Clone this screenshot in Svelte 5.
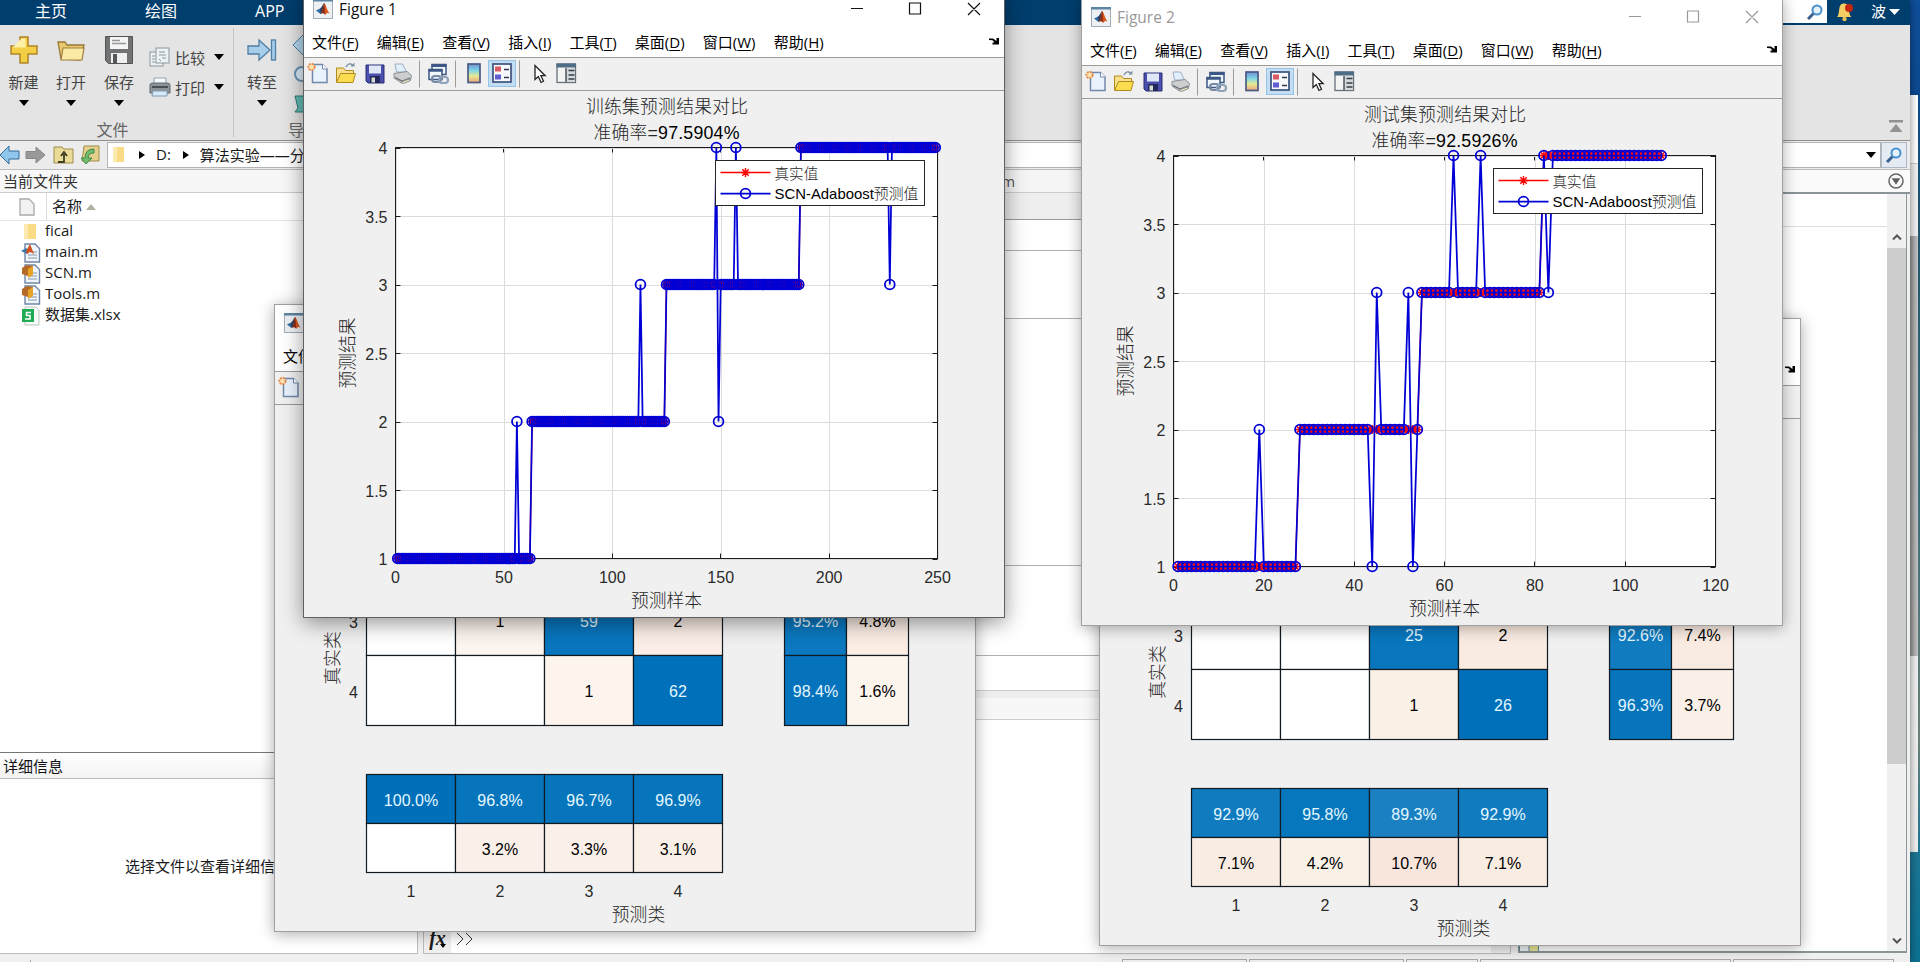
<script lang="ts">
  interface Cell {
    x: number;
    y: number;
    w: number;
    h: number;
    text?: string;
    fill: string;
    light?: boolean;
  }

  const MENUS = [
    ["文件", "F"], ["编辑", "E"], ["查看", "V"], ["插入", "I"],
    ["工具", "T"], ["桌面", "D"], ["窗口", "W"], ["帮助", "H"],
  ];

  const FILES = [
    { name: "fical", kind: "folder" },
    { name: "main.m", kind: "script" },
    { name: "SCN.m", kind: "func" },
    { name: "Tools.m", kind: "func" },
    { name: "数据集.xlsx", kind: "sheet" },
  ];

  // Axes box, in window coordinates
  const L = 92.5, R = 634.5, T = 157.5, B = 568.5;

  // One class per block, with the misclassified samples overridden
  function buildSeries(ends: number[], errors: Record<number, number>) {
    const truth: number[] = [];
    const pred: number[] = [];
    for (let i = 1; i <= ends[ends.length - 1]; i++) {
      const cls = ends.findIndex(e => i <= e) + 1;
      truth.push(cls);
      pred.push(errors[i] ?? cls);
    }
    return { truth, pred };
  }

  const PLOTS = [
    {
      title: "训练集预测结果对比",
      accuracy: "97.5904%",
      max: 250,
      step: 50,
      ...buildSeries([62, 124, 186, 249], { 56: 2, 113: 3, 148: 4, 149: 2, 157: 4, 228: 3 }),
    },
    {
      title: "测试集预测结果对比",
      accuracy: "92.5926%",
      max: 120,
      step: 20,
      ...buildSeries([27, 54, 81, 108], { 19: 2, 44: 1, 45: 3, 52: 3, 53: 1, 62: 4, 68: 4, 83: 3 }),
    },
  ];

  const Y_TICKS = [1, 1.5, 2, 2.5, 3, 3.5, 4];

  const px = (i: number, max: number) => L + (i * (R - L)) / max;
  const py = (v: number) => B - ((v - 1) * (B - T)) / 3;
  const toPoints = (vals: number[], max: number) =>
    vals.map((v, i) => `${px(i + 1, max).toFixed(2)},${py(v).toFixed(2)}`).join(" ");
  const ticks = (max: number, step: number) =>
    Array.from({ length: max / step + 1 }, (_, i) => i * step);

  // rows: [text, fill] pairs; blue cells get light text
  function grid(rows: string[][][], xs: number[], ys: number[]): Cell[] {
    return rows.flatMap((row, r) =>
      row.map(([text, fill], c) => ({
        x: xs[c], y: ys[r], w: xs[c + 1] - xs[c], h: ys[r + 1] - ys[r],
        text, fill, light: fill.startsWith("#0") || fill.startsWith("#1"),
      }))
    );
  }

  const COLS = [92.5, 181.5, 270.5, 359.5, 448.5];
  const SIDE = [510.5, 572.5, 634.5];
  const ROWS = [281.5, 351.5, 421.5];
  const FOOT = [470.5, 519.5, 568.5];

  const MATRICES = [
    [
      ...grid([
        [["", "#fff"], ["1", "#fcf4ee"], ["59", "#0875bd"], ["2", "#fbeee6"]],
        [["", "#fff"], ["", "#fff"], ["1", "#fcf4ed"], ["62", "#0070ba"]],
      ], COLS, ROWS),
      ...grid([
        [["95.2%", "#0b78bf"], ["4.8%", "#fbede4"]],
        [["98.4%", "#0473bc"], ["1.6%", "#fcf5ee"]],
      ], SIDE, ROWS),
      ...grid([
        [["100.0%", "#006fb9"], ["96.8%", "#0675bb"], ["96.7%", "#0675bb"], ["96.9%", "#0675bb"]],
        [["", "#fff"], ["3.2%", "#fbf0e9"], ["3.3%", "#fbf0e9"], ["3.1%", "#fbf0e8"]],
      ], COLS, FOOT),
    ],
    [
      ...grid([
        [["", "#fff"], ["", "#fff"], ["25", "#0876bd"], ["2", "#f9ebe1"]],
        [["", "#fff"], ["", "#fff"], ["1", "#f9f0e6"], ["26", "#0070ba"]],
      ], COLS, ROWS),
      ...grid([
        [["92.6%", "#107bbf"], ["7.4%", "#f9ebe2"]],
        [["96.3%", "#0675bb"], ["3.7%", "#faf0e7"]],
      ], SIDE, ROWS),
      ...grid([
        [["92.9%", "#107bbf"], ["95.8%", "#0777bd"], ["89.3%", "#1a80c1"], ["92.9%", "#107bbf"]],
        [["7.1%", "#f9ece3"], ["4.2%", "#f9f0e6"], ["10.7%", "#f8e6dc"], ["7.1%", "#f9ece3"]],
      ], COLS, FOOT),
    ],
  ];
</script>

{#snippet matlabIcon()}
  <svg width="20" height="20" viewBox="0 0 20 20">
    <rect x=".5" y=".5" width="19" height="19" fill="#eef1f4" stroke="#a3abb5" />
    <rect width="20" height="2.5" fill="#5d86a3" />
    <path d="M3 11.5l4-2 3 2.5-2.5 3z" fill="#2e6ca3" />
    <path d="M7 9.5c2-1 3-5 4.2-5.5L9.5 12.5 7.5 15z" fill="#30405e" />
    <path d="M11.2 4c1.8 1.5 2.6 7 5.3 10.5-2-1-2.6-1-4.5 1.5-1-2-2-2.500-4.200-1.200C10 13 10 7 11.200 4z" fill="#d95a20" />
    <path d="M11.200 4c.8 3 .3 7 1 11.500C10.500 14 9.500 14 8 14.800 10 12 10 7 11.200 4z" fill="#8c2c16" />
  </svg>
{/snippet}

{#snippet toolbar()}
  <div class="fig-toolbar">
    <svg width="280" height="32" viewBox="0 0 280 32">
      <g>
        <path d="M8.500 6.500h10l4.500 4.500v13.500h-14.500z" fill="#eaf3fd" stroke="#7288ad" stroke-width="1.500" />
        <path d="M18.500 6v5h5" fill="#fff" stroke="#7288ad" />
        <circle cx="7.500" cy="9" r="3.200" fill="#fbe0b0" stroke="#e38846" stroke-width="1.800" stroke-dasharray="2 1" />
      </g>
      <g stroke="#b28a1e">
        <path d="M32.500 24v-14h7l2 2.500h8v4" fill="#f8e08a" />
        <path d="M32.500 24.500l4-9h15l-2.500 9z" fill="#f9dc4f" />
        <path d="M42 9c2-4 5-4 7-1" fill="none" stroke="#7b93a5" stroke-width="1.500" />
        <path d="M46.500 8.500h4v-4z" fill="#7b93a5" stroke="none" />
      </g>
      <g>
        <path d="M62 7h18v18h-16l-2-2z" fill="#4a4fae" stroke="#292d75" />
        <rect x="65" y="7.500" width="12" height="8" fill="#dfe7f8" />
        <rect x="66" y="18" width="10" height="7" fill="#23275a" />
        <rect x="67.500" y="19.500" width="3.500" height="5" fill="#d7dcd0" />
      </g>
      <g stroke="#8a9098">
        <path d="M92.500 14L91 6h7.500l4 8z" fill="#e3effa" stroke="#9bb0c4" />
        <path d="M90 15.500l13-2 4.500 4-1 4.500-9 3-7.500-5z" fill="#cdcfcf" />
        <path d="M91 19.500l7 3.500 8-3" fill="none" stroke="#6b7077" stroke-width="1.300" />
        <path d="M97 24l8-3 1.500 1.500-7 3z" fill="#f0e8b0" />
      </g>
      <path d="M115.500 2.500v27M151.500 2.500v27M215.500 2.500v27" stroke="#9b9b93" />
      <g fill="none">
        <rect x="128" y="6.500" width="14" height="10" fill="#f1f6fb" stroke="#3c5785" stroke-width="1.500" />
        <path d="M127.500 7.500h15" stroke="#3c5785" stroke-width="3" />
        <rect x="125" y="11.500" width="13" height="10" fill="#f1f6fb" stroke="#3c5785" stroke-width="1.500" />
        <path d="M124.500 12.500h14" stroke="#3c5785" stroke-width="2.500" />
        <rect x="128" y="18" width="9" height="6" rx="3" stroke="#768aa5" stroke-width="2.200" />
        <rect x="135" y="19" width="9" height="6" rx="3" stroke="#8fa3b8" stroke-width="2.200" />
      </g>
      <defs>
        <linearGradient id="cbar" x1="0" y1="0" x2="0" y2="1">
          <stop offset="0" stop-color="#718ed4" />
          <stop offset=".35" stop-color="#7ed7e7" />
          <stop offset=".65" stop-color="#e6ea92" />
          <stop offset="1" stop-color="#eca27b" />
        </linearGradient>
      </defs>
      <rect x="164" y="6" width="12" height="18.500" fill="url(#cbar)" stroke="#495b83" stroke-width="1.700" />
      <rect x="184.500" y="2.500" width="27" height="26" fill="#c2dcf1" stroke="#94c4e8" />
      <rect x="189" y="6" width="18" height="18" fill="#f7f9fc" stroke="#3e527d" stroke-width="1.700" />
      <rect x="191" y="8.500" width="6" height="5" fill="#d95b61" />
      <rect x="191" y="16.500" width="6" height="5" fill="#625fd0" />
      <path d="M200 11.500h5M200 19.500h5" stroke="#30394c" stroke-width="1.500" />
      <path d="M231 7.500v14l3.300-3 2.700 6 2.500-1.200-2.600-5.600h4.300z" fill="#fff" stroke="#222" stroke-width="1.300" />
      <rect x="253" y="6" width="18.500" height="18.500" fill="#f2f3f3" stroke="#67717b" stroke-width="1.300" />
      <rect x="252.500" y="5.500" width="19.500" height="4" fill="#4d6c85" />
      <rect x="262" y="10" width="9" height="14" fill="#d5d8da" />
      <path d="M262 10v14M264.500 12.500h6M264.500 17h6M264.500 21h6" stroke="#333d47" stroke-width="1.300" fill="none" />
    </svg>
  </div>
{/snippet}

{#snippet figure(cls: string, title: string, body: any, data: any)}
  <section class="figure-window {cls}">
    <header class="titlebar">
      {@render matlabIcon()}
      <span class="caption">{title}</span>
      <svg class="controls" width="136" height="20" viewBox="0 0 136 20" fill="none" stroke="currentColor" stroke-width="1.200">
        <path d="M0 9.500h12M58.500 4h11v11h-11zM117 4l12 12M129 4l-12 12" />
      </svg>
    </header>
    <nav class="menubar">
      {#each MENUS as [label, key]}
        <span class="menu">{label}(<u>{key}</u>)</span>
      {/each}
      <svg class="dock" width="11" height="8" viewBox="0 0 11 8">
        <path d="M0 1.500h4l3.500 2.500V1H10v6.500H3.500V5.500h2L3.500 3.200 0 3z" fill="#000" />
      </svg>
    </nav>
    {@render toolbar()}
    <svg class="canvas" width="700" height="525" viewBox="1 101 700 525">
      {@render body(data)}
    </svg>
  </section>
{/snippet}

{#snippet linePlot(p: any)}
  <text class="heading" x="364" y="123" textLength="162">{p.title}</text>
  <text class="heading" x="363.500" y="149" textLength="146">准确率=<tspan class="dark">{p.accuracy}</tspan></text>
  <rect x={L} y={T} width={R - L} height={B - T} fill="#fff" />
  {#each ticks(p.max, p.step) as t}
    <path class="gridline" d="M{Math.round(px(t, p.max)) + 0.5} {T}V{B}" />
    <path class="axis" d="M{Math.round(px(t, p.max) - 0.5) + 0.5} {B}v-5M{Math.round(px(t, p.max) - 0.5) + 0.5} {T}v5" />
    <text class="tick" x={px(t, p.max)} y="592.500">{t}</text>
  {/each}
  {#each Y_TICKS as t}
    <path class="gridline" d="M{L} {Math.round(py(t)) + 0.5}H{R}" />
    <path class="axis" d="M{L} {Math.round(py(t)) + 0.5}h5M{R} {Math.round(py(t)) + 0.5}h-5" />
    <text class="tick end" x="84.500" y={py(t) + 6.5}>{t}</text>
  {/each}
  <rect class="axis" x={L} y={T} width={R - L} height={B - T} fill="none" />

  <polyline class="truth" points={toPoints(p.truth, p.max)} />
  {#each p.truth as v, i}
    <use href="#star" x={px(i + 1, p.max)} y={py(v)} />
  {/each}
  <polyline class="pred" points={toPoints(p.pred, p.max)} />
  {#each p.pred as v, i}
    <circle class="pred" cx={px(i + 1, p.max)} cy={py(v)} r="4.900" />
  {/each}

  <rect x="412.500" y="170.500" width="209" height="45" fill="#fff" stroke="#262626" />
  <path class="truth" d="M417.500 182.500h50" />
  <use href="#star" x="442.500" y="182.500" />
  <path class="pred" d="M417.500 203.500h50" />
  <circle class="pred" cx="442.500" cy="203.500" r="4.900" />
  <text class="legend" x="471.500" y="189">真实值</text>
  <text class="legend dark" x="471.500" y="209" textLength="144" lengthAdjust="spacingAndGlyphs">SCN-Adaboost<tspan class="cjk">预测值</tspan></text>

  <text class="axis-label" x="363.500" y="617">预测样本</text>
  <text class="axis-label" transform="translate(51 363) rotate(-90)">预测结果</text>
{/snippet}

{#snippet confusion(cells: Cell[])}
  {#each cells as c}
    <rect x={c.x} y={c.y} width={c.w} height={c.h} fill={c.fill} stroke="#111a20" stroke-width="1.200" />
    {#if c.text}
      <text class="value" class:light={c.light} x={c.x + c.w / 2} y={c.y + c.h / 2 + 6.500}>{c.text}</text>
    {/if}
  {/each}
  <text class="tick" x="79.500" y="323.500">3</text>
  <text class="tick" x="79.500" y="393.500">4</text>
  {#each [1, 2, 3, 4] as n}
    <text class="tick" x={48 + n * 89} y="593">{n}</text>
  {/each}
  <text class="axis-label" x="364.500" y="616.500">预测类</text>
  <text class="axis-label" transform="translate(65 354) rotate(-90)">真实类</text>
{/snippet}

<svg class="defs" width="0" height="0">
  <path id="star" d="M-4.500 0h9M0-4.500v9M-3.200-3.200l6.400 6.400M-3.200 3.200l6.400-6.400" stroke="#f00" stroke-width="1.400" />
</svg>

<div class="desktop">
  <div class="behind">
    <div class="behind-top"></div>
    <div class="behind-bar"></div>
  </div>

  <main class="ide">
    <div class="tabs">
      <span>主页</span>
      <span>绘图</span>
      <span>APP</span>
      <div class="tabs-right">
        <div class="search">
          <svg width="16" height="16" viewBox="0 0 16 16" fill="none">
            <path d="M7 9l-6 6" stroke="#3b608f" stroke-width="3" />
            <circle cx="10" cy="6" r="4.500" fill="#e3f2fd" stroke="#4a91cc" stroke-width="2" />
          </svg>
        </div>
        <svg width="18" height="20" viewBox="0 0 18 20">
          <path d="M1 15c2.500-2 1.500-9 3.500-12 1.500-2 5.500-2 7 0 2 3 1 10 4 12z" fill="#f3cd63" />
          <circle cx="8.500" cy="17" r="2.200" fill="#e9bf55" />
          <circle cx="13" cy="6" r="4" fill="#c6260f" />
        </svg>
        <span class="user">波</span>
        <svg width="11" height="6" viewBox="0 0 11 6"><path d="M0 0h11L5.500 6z" fill="#fff" /></svg>
      </div>
    </div>

    <div class="ribbon">
      <div class="ribbon-group file-group">
        <div class="big-buttons">
          <div class="big">
            <svg width="30" height="30" viewBox="0 0 30 30">
              <path d="M11 2h8v9h9v8h-9v9h-8v-9H2v-8h9z" fill="#f4cf45" stroke="#b08428" stroke-width="1.500" />
              <path d="M12.500 3.500h4v9h-13z" fill="#fdf0a8" />
            </svg>
            <span>新建</span><i></i>
          </div>
          <div class="big">
            <svg width="30" height="30" viewBox="0 0 30 30">
              <path d="M5 24L2 7h7l2 3h17l-4 15z" fill="#e9c96d" stroke="#967736" stroke-width="1.300" />
              <path d="M5 25L7 13h21l-2 12z" fill="#fbeaa5" stroke="#a08040" stroke-width="1.200" />
            </svg>
            <span>打开</span><i></i>
          </div>
          <div class="big">
            <svg width="30" height="30" viewBox="0 0 30 30">
              <path d="M1.500 1.500h27v27h-24l-3-3z" fill="#707274" stroke="#515355" />
              <rect x="6" y="2" width="18" height="12" fill="#f4f5f5" />
              <path d="M8 5.500h8M8 8.500h14" stroke="#999" stroke-width="1.500" />
              <rect x="7" y="18" width="16" height="10" fill="#efefef" />
              <rect x="9" y="19" width="4" height="9" fill="#55585a" />
            </svg>
            <span>保存</span><i></i>
          </div>
        </div>
        <div class="small-buttons">
          <div class="small">
            <svg width="22" height="22" viewBox="0 0 22 22" fill="#edf2f4" stroke="#89959c">
              <rect x="1" y="6" width="13" height="14" />
              <rect x="7" y="2" width="13" height="15" />
              <path d="M10 6h6M10 9h7M10 13l2 2M3 10h3M3 13h3M3 16h3M13 12h4" />
            </svg>
            <span>比较</span><i></i>
          </div>
          <div class="small">
            <svg width="22" height="22" viewBox="0 0 22 22">
              <path d="M5 2h12v6H5z" fill="#f7fbff" stroke="#90a6b6" />
              <path d="M1 9q0-2 3-2h14q3 0 3 2v8H1z" fill="#8d9499" stroke="#5f686e" />
              <path d="M3 11h16" stroke="#4b5056" stroke-width="2" />
              <path d="M4 15h14v5H3z" fill="#d6eafa" stroke="#7f9cb2" />
            </svg>
            <span>打印</span><i></i>
          </div>
        </div>
        <div class="group-name">文件</div>
      </div>
      <div class="ribbon-group nav-group">
        <div class="big">
          <svg width="30" height="30" viewBox="0 0 30 30" fill="#a6cdea" stroke="#4f7fa3" stroke-width="1.300">
            <path d="M1 11h11V5l11 10-11 10v-6H1z" />
            <rect x="24.500" y="5" width="4" height="20" />
          </svg>
          <span>转至</span><i></i>
        </div>
        <svg class="nav-side" width="16" height="90" viewBox="0 0 16 90">
          <path d="M1 16L12 5v22z" fill="#b3d7ef" stroke="#4f7fa3" />
          <circle cx="10" cy="45" r="7" fill="#dceefa" stroke="#6994b4" stroke-width="2" />
          <path d="M3 67h14v16H3l3-4z" fill="#64bcb7" stroke="#2c7774" />
        </svg>
        <div class="group-name nav-name">导航</div>
      </div>
      <svg class="collapse" width="14" height="14" viewBox="0 0 14 14" fill="#929292">
        <path d="M0 1h14v2.500H0zM7 5l6.500 8H.5z" />
      </svg>
    </div>

    <div class="address">
      <svg width="104" height="26" viewBox="0 0 104 26">
        <path d="M0 13L9 4v5h10v8H9v5z" fill="#8ec6ec" stroke="#336b96" />
        <path d="M45 13L36 5v4.500H26v7h10V21z" fill="#999" stroke="#888" />
        <path d="M54 5h8l2 2h9v14H54z" fill="#eadb96" stroke="#a08d4c" />
        <path d="M58 20h6v-8M61 14l3-4 3 4" fill="none" stroke="#3f3d22" stroke-width="1.800" />
        <path d="M84 4h15v15H82z" fill="#e4d08a" stroke="#a08d4c" />
        <path d="M94 7q-9 0-9 9h-4l5 6 6-6h-4q0-5 6-5z" fill="#72bd6d" stroke="#3f8647" />
      </svg>
      <div class="path">
        <svg width="16" height="18" viewBox="0 0 16 18">
          <path d="M2 1h11v15H2z" fill="#f9dc85" /><path d="M2 1h4v16l-4-2z" fill="#fdeab0" />
        </svg>
        <b></b><span>D:</span><b></b><span>算法实验——分类</span>
        <svg class="path-arrow" width="10" height="6" viewBox="0 0 10 6"><path d="M0 0h10L5 6z" /></svg>
      </div>
      <div class="path-search">
        <svg width="16" height="16" viewBox="0 0 16 16" fill="none">
          <path d="M7 9l-6 6" stroke="#3b608f" stroke-width="3" />
          <circle cx="10" cy="6" r="4.500" fill="#e3f2fd" stroke="#4a91cc" stroke-width="2" />
        </svg>
      </div>
    </div>

    <div class="workspace">
      <aside class="left">
        <div class="panel-head">当前文件夹</div>
        <div class="list-head">
          <svg width="16" height="18" viewBox="0 0 16 18"><path d="M1 1h9l5 5v11H1z" fill="#f2f2f2" stroke="#aaa" stroke-width="1.300" /></svg>
          <span>名称</span>
          <svg width="10" height="6" viewBox="0 0 10 6"><path d="M0 6h10L5 0z" fill="#b2b2a2" /></svg>
        </div>
        <ul class="files">
          {#each FILES as file}
            <li>
              <svg width="20" height="20" viewBox="0 0 20 20">
                {#if file.kind === "folder"}
                  <path d="M3 2h12v15H3z" fill="#f9dc85" /><path d="M3 2h4v16l-4-2z" fill="#fdeab0" />
                {:else if file.kind === "sheet"}
                  <path d="M4 1h11l3 3v15H4z" fill="#f8faf9" stroke="#b9c5bd" />
                  <rect x="1" y="3" width="12" height="13" fill="#1fab54" />
                  <path d="M10 6.500H5.500v3h3.500v3.500H4" fill="none" stroke="#fff" stroke-width="1.500" />
                {:else}
                  <path d="M4 1h10l4.500 4.500V19H4z" fill="#f0f5fb" stroke="#6f85a7" stroke-width="1.400" />
                  <path d="M7 12h9M7 15h9M12 9h4" stroke="#8595aa" />
                  {#if file.kind === "script"}
                    <path d="M0 8l5-3 4 3-3 3z" fill="#3b7aac" /><path d="M5 8l4-7 4 10-4-2-3 2z" fill="#d2501e" />
                  {:else}
                    <path d="M1 4l5-3 6 1v7l-5 3-6-2z" fill="#b56a28" /><path d="M7 5l5-3v9l-5 3z" fill="#e8a427" />
                  {/if}
                {/if}
              </svg>
              <span>{file.name}</span>
            </li>
          {/each}
        </ul>
        <div class="panel-head details">详细信息</div>
        <div class="hint">选择文件以查看详细信息</div>
      </aside>
      <div class="center">
        <div class="editor-head">main.m</div>
        <div class="editor-tabs"></div>
        <div class="editor-body">
          <div class="cellrow a"></div>
          <div class="cellrow b"></div>
          <div class="cellrow c"></div>
          <div class="cellrow d"></div>
        </div>
        <div class="command-head"></div>
        <div class="command">
          <span class="fx"><em>fx</em><i></i></span>
          <svg width="18" height="14" viewBox="0 0 18 14" fill="none" stroke="#333"><path d="M1 1l6 6-6 6M10 1l6 6-6 6" /></svg>
          <div class="command-scroll"></div>
        </div>
      </div>
      <aside class="right">
        <div class="right-head">
          <svg width="16" height="16" viewBox="0 0 16 16" fill="none" stroke="#666" stroke-width="1.500">
            <circle cx="8" cy="8" r="7" /><path d="M5 6h6l-3 4.500z" fill="#555" />
          </svg>
        </div>
        <div class="vars">
          <div class="vars-head"></div>
          <div class="scroll">
            <svg width="10" height="6" viewBox="0 0 10 6" fill="none" stroke="#555" stroke-width="2"><path d="M1 5.500l4-4 4 4" /></svg>
            <div class="thumb"></div>
            <svg width="10" height="6" viewBox="0 0 10 6" fill="none" stroke="#555" stroke-width="2"><path d="M1 .5l4 4 4-4" /></svg>
          </div>
          <svg class="var-icon" width="20" height="7" viewBox="0 0 20 7">
            <rect x=".5" y=".5" width="19" height="8" fill="#eef5f8" stroke="#65889a" /><path d="M10 1h9v6h-9z" fill="#e7e594" /><path d="M10 0v7M0 1.500h20" stroke="#65889a" />
          </svg>
        </div>
      </aside>
    </div>

    <div class="status">
      <div class="s0"></div>
      <div class="s1"></div>
      <div class="s2"></div>
      <div class="s3"></div>
      <div class="s4"></div>
      <div class="s5"></div>
    </div>
  </main>

  {@render figure("fig3", "Figure 3", confusion, MATRICES[0])}
  {@render figure("fig4", "Figure 4", confusion, MATRICES[1])}
  {@render figure("fig2", "Figure 2", linePlot, PLOTS[1])}
  {@render figure("fig1", "Figure 1", linePlot, PLOTS[0])}
</div>

<style>
  :global(body) {
    overflow: hidden;
  }

  .desktop {
    position: relative;
    width: 1920px;
    height: 962px;
    overflow: hidden;
    background: linear-gradient(#0f4f9c 0, #0c4a90 95px, #20566b 220px, #3d6f7a 500px, #6b8178 740px, #1c7594 850px, #0c7193 962px);
    font-family: "Open Sans", "Noto Sans CJK SC", sans-serif;
    font-size: 15px;
    color: #1a1a1a;
  }

  .defs {
    position: absolute;
  }

  svg {
    flex-shrink: 0;
  }

  .behind {
    position: absolute;
    left: 1900px;
    top: 95px;
    width: 18px;
    height: 757px;
    background: #f0f0f0;
  }

  .behind-top {
    height: 68px;
    background: #fff;
    border-bottom: 1px solid #ccc;
  }

  .behind-bar {
    height: 420px;
    margin-top: 72px;
    background: linear-gradient(90deg, #8f8f8f 50%, #c6c6c8);
  }

  /* main window */
  .ide {
    width: 1910px;
    height: 962px;
    display: flex;
    flex-direction: column;
    position: relative;
    background: #f0f0f0;
    box-shadow: 0 0 8px rgba(0, 0, 0, 0.5);
  }

  .tabs {
    height: 25px;
    display: flex;
    align-items: center;
    box-sizing: border-box;
    padding: 0 10px 2px 35px;
    gap: 78px;
    background: #003e6e;
    color: #fff;
    font-size: 16px;
    line-height: 23px;
  }

  .tabs-right {
    display: flex;
    align-items: center;
    margin-left: auto;
  }

  .search {
    width: 100px;
    height: 23px;
    display: flex;
    align-items: center;
    justify-content: flex-end;
    padding-right: 4px;
    margin-right: 9px;
    box-sizing: border-box;
    background: #fff;
  }

  .user {
    margin: 0 3px 0 17px;
    font-size: 15px;
  }

  .ribbon {
    height: 115px;
    display: flex;
    background: #e4e4e4;
    border-bottom: 1px solid #8e8e8e;
    color: #444;
  }

  .ribbon-group {
    position: relative;
    display: flex;
  }

  .file-group {
    width: 234px;
  }

  .file-group::after {
    content: "";
    position: absolute;
    right: 0;
    top: 3px;
    width: 1px;
    height: 109px;
    background: #c4c4c4;
  }

  .big-buttons {
    display: flex;
  }

  .big {
    width: 48px;
    display: flex;
    flex-direction: column;
    align-items: center;
    padding-top: 10px;
    line-height: 20px;
  }

  .big-buttons .big:first-child {
    width: 47px;
  }

  .big span {
    margin-top: 7px;
  }

  i {
    border: 5px solid transparent;
    border-top: 6px solid #000;
    border-bottom: 0;
  }

  .big i {
    margin-top: 8px;
  }

  .small-buttons {
    display: flex;
    flex-direction: column;
    gap: 8px;
    padding: 21px 0 0 6px;
  }

  .small {
    display: flex;
    align-items: center;
    height: 22px;
  }

  .small span {
    margin: 0 9px 0 4px;
  }

  .group-name {
    position: absolute;
    left: 0;
    right: 9px;
    top: 92px;
    text-align: center;
    font-size: 16px;
    color: #666;
  }

  .nav-group {
    width: 160px;
    padding-left: 4px;
  }

  .nav-side {
    margin: 4px 0 0 6px;
  }

  .nav-name {
    left: 54px;
    text-align: left;
  }

  .collapse {
    margin: 94px 7px 0 auto;
  }

  .address {
    height: 29px;
    box-sizing: border-box;
    padding-top: 1px;
    display: flex;
    border-bottom: 1px solid #bbb;
    background: #ececec;
  }

  .path {
    flex: 1;
    display: flex;
    align-items: center;
    gap: 11px;
    height: 24px;
    margin-left: 3px;
    padding-left: 3px;
    background: #fff;
    border: 1px solid #b4b4b4;
  }

  .path span {
    position: relative;
    top: -1px;
  }

  .path b {
    border: 4px solid transparent;
    border-left: 6px solid #000;
    border-right: 0;
    margin-left: 1px;
  }

  .path-arrow {
    margin: 0 4px 0 auto;
  }

  .path-search {
    width: 24px;
    height: 24px;
    display: grid;
    place-items: center;
    margin-right: 3px;
    background: #e4ebf2;
    border: 1px solid #adb9c4;
  }

  .workspace {
    flex: 1;
    min-height: 0;
    display: flex;
  }

  .left {
    width: 417px;
    display: flex;
    flex-direction: column;
    background: #fff;
    border-right: 1px solid #bbb;
    border-bottom: 1px solid #bbb;
  }

  .panel-head {
    height: 22px;
    line-height: 22px;
    padding-left: 3px;
    background: #f7f7f7;
    border-bottom: 1px solid #ccc;
    color: #333;
  }

  .list-head {
    height: 27px;
    display: flex;
    align-items: center;
    padding-left: 19px;
    border-bottom: 1px solid #e3e3e3;
  }

  .list-head span {
    height: 27px;
    line-height: 27px;
    margin: 0 4px 0 11px;
    padding-left: 5px;
    border-left: 1px solid #ddd;
  }

  .files {
    height: 531px;
    margin: 0;
    padding: 0 0 0 21px;
    list-style: none;
  }

  .files li {
    display: flex;
    align-items: center;
    gap: 4px;
    height: 21px;
  }

  .files span {
    line-height: 18px;
    padding-bottom: 3px;
  }

  .details {
    height: 25px;
    line-height: 26px;
    background: linear-gradient(#fff, #f3f3f3);
    border-top: 1px solid #777;
    border-bottom-color: #bbb;
    color: #111;
  }

  .hint {
    padding: 76px 0 0 125px;
  }

  .center {
    width: 1086px;
    margin-left: 5px;
    display: flex;
    flex-direction: column;
    background: #fff;
    border: 1px solid #bbb;
    border-top: 0;
  }

  .editor-head {
    height: 22px;
    line-height: 22px;
    padding-left: 538px;
    background: #f5f5f5;
    border-bottom: 1px solid #ccc;
    color: #555;
  }

  .editor-tabs {
    height: 26px;
    background: #eee;
    border-bottom: 1px solid #999;
  }

  .editor-body {
    height: 470px;
    border-bottom: 1px solid #ccc;
  }

  .cellrow {
    border-bottom: 1px solid #b0b0b0;
  }

  .a {
    height: 30px;
  }

  .b {
    height: 67px;
  }

  .c {
    height: 246px;
  }

  .d {
    height: 89px;
  }

  .command-head {
    height: 21px;
    background: #f7f7f7;
    border-top: 7px solid #eee;
    border-bottom: 1px solid #ccc;
  }

  .command {
    flex: 1;
    display: flex;
    align-items: flex-end;
    padding-bottom: 7px;
    gap: 5px;
  }

  .fx {
    width: 27px;
    height: 28px;
    margin-bottom: -7px;
    background: #efefef;
    display: flex;
    justify-content: center;
    position: relative;
  }

  .fx em {
    font: italic bold 20px/26px "Liberation Serif", serif;
  }

  .fx i {
    position: absolute;
    right: 5px;
    bottom: 5px;
    border-width: 4px 3px 0;
  }

  .command-scroll {
    width: 19px;
    align-self: stretch;
    margin: 0 0 -7px auto;
    background: #f0f0f0;
  }

  .right {
    flex: 1;
    margin-left: 7px;
  }

  .right-head {
    height: 22px;
    display: flex;
    align-items: center;
    justify-content: flex-end;
    padding-right: 6px;
    background: #fafafa;
    border-bottom: 2px solid #8b9498;
  }

  .vars {
    height: 757px;
    margin-right: 3px;
    position: relative;
    display: flex;
    justify-content: flex-end;
    background: #fff;
    border: 1px solid #8a9599;
    border-width: 0 1px 2px;
  }

  .vars-head {
    flex: 1;
    height: 32px;
    border-bottom: 1px solid #ddd;
  }

  .scroll {
    width: 19px;
    padding: 40px 0 7px;
    box-sizing: border-box;
    display: flex;
    flex-direction: column;
    align-items: center;
    background: #f0f0f0;
  }

  .scroll svg:last-child {
    margin-top: auto;
  }

  .thumb {
    width: 19px;
    height: 516px;
    margin-top: 8px;
    background: #cdcdcd;
  }

  .var-icon {
    position: absolute;
    left: 0;
    bottom: 0;
  }

  .status {
    height: 8px;
    display: flex;
    align-items: flex-end;
    gap: 2px;
    background: #f0f0f0;
  }

  .status div {
    height: 2px;
    border: 1px solid #a6a6a6;
    border-bottom: 0;
  }

  .status .s0 {
    width: 30px;
    border-width: 0 1px 0 0;
    margin-right: 1089px;
  }

  .s1 {
    width: 123px;
  }

  .s2 {
    width: 153px;
  }

  .s3 {
    width: 70px;
  }

  .s4 {
    width: 249px;
  }

  .s5 {
    width: 159px;
  }

  /* figure windows */
  .figure-window {
    position: absolute;
    width: 702px;
    height: 628px;
    box-sizing: border-box;
    background: #f0f0f0;
    border: 1px solid #a0a0a0;
    box-shadow: 0 2px 14px rgba(0, 0, 0, 0.33);
    display: flex;
    flex-direction: column;
  }

  .fig1 {
    left: 303px;
    top: -10px;
    border-color: #606060;
    box-shadow: 0 5px 20px rgba(0, 0, 0, 0.42);
  }

  .fig2 {
    left: 1081px;
    top: -2px;
  }

  .fig3 {
    left: 274px;
    top: 304px;
  }

  .fig4 {
    left: 1099px;
    top: 318px;
  }

  .titlebar {
    height: 38px;
    display: flex;
    align-items: center;
    padding: 0 17px 2px 9px;
    box-sizing: border-box;
    background: #fff;
    color: #999;
  }

  .caption {
    margin-left: 6px;
    font-size: 15.5px;
  }

  .fig1 .titlebar {
    color: #111;
  }

  .controls {
    margin-left: auto;
  }

  .menubar {
    height: 28px;
    display: flex;
    align-items: center;
    box-sizing: border-box;
    padding: 0 4px 4px 8px;
    gap: 18.2px;
    background: #fff;
    border-bottom: 1px solid #9c9c96;
    color: #000;
    font-size: 15px;
    white-space: nowrap;
    margin-bottom: 0;
    flex: 0 0 29px;
  }

  .menu u {
    text-underline-offset: 2px;
  }

  .dock {
    margin-left: auto;
  }

  .fig-toolbar {
    height: 32px;
    border-bottom: 1px solid #9c9c96;
  }

  .fig-toolbar svg,
  .canvas {
    display: block;
  }

  .canvas text {
    font-family: "Liberation Sans", "Noto Sans CJK SC", sans-serif;
    fill: #2a2a2a;
    font-weight: 300;
  }

  .canvas .heading,
  .canvas .axis-label {
    font-size: 17.8px;
    text-anchor: middle;
    fill: #262626;
  }

  .canvas .dark {
    fill: #000;
  }

  .canvas .tick,
  .canvas .value {
    font-size: 16px;
    text-anchor: middle;
  }

  .canvas .end {
    text-anchor: end;
  }

  .canvas .value {
    fill: #000;
  }

  .canvas .light {
    fill: #e4f7ff;
  }

  .canvas .legend {
    font-size: 14.6px;
  }

  .canvas .cjk {
    fill: #262626;
  }

  .gridline {
    stroke: #dcdcdc;
  }

  .axis {
    stroke: #1c1c1c;
    fill: none;
  }

  .truth {
    fill: none;
    stroke: #f00;
    stroke-width: 1.4;
  }

  .pred {
    fill: none;
    stroke: #0000d6;
    stroke-width: 1.75;
  }
</style>
